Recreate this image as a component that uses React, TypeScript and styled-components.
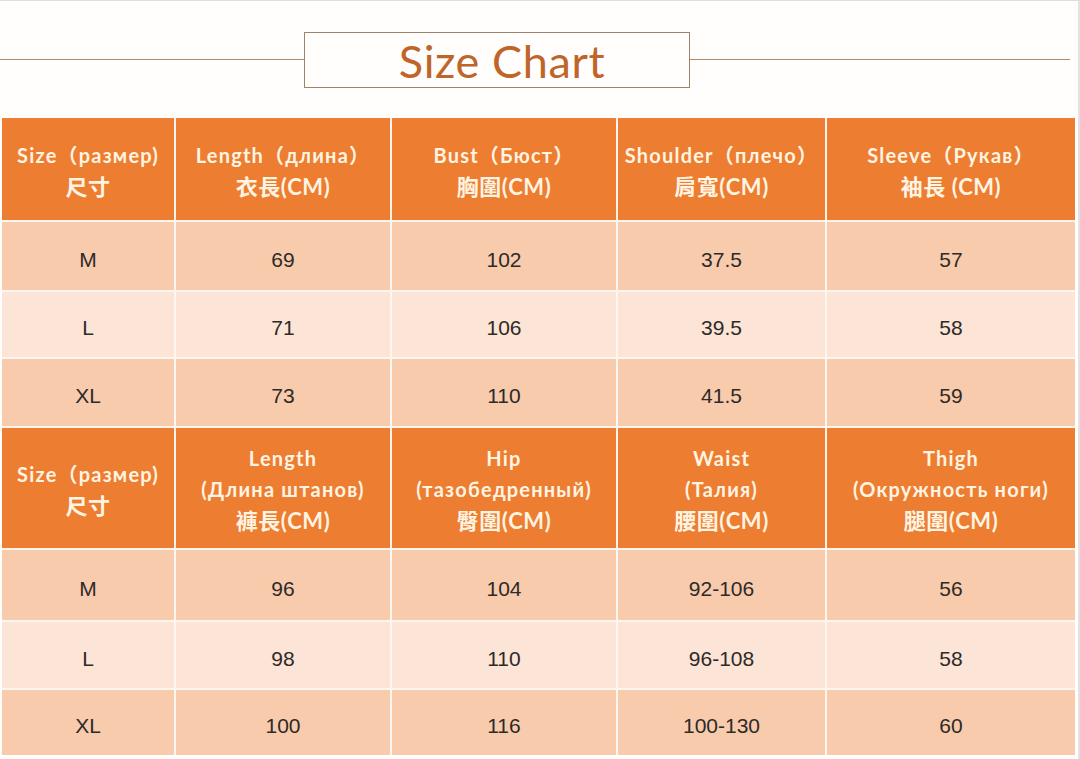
import React from 'react';
import styled, { createGlobalStyle } from 'styled-components';

const GlobalStyle = createGlobalStyle`
  html, body {
    margin: 0;
    padding: 0;
    background: #ffffff;
  }
`;

const Page = styled.div`
  width: 1080px;
  height: 759px;
  box-sizing: border-box;
  background: #fffefc;
  border-top: 1px solid #dedede;
  border-right: 2px solid #e2e2e2;
  display: flex;
  flex-direction: column;
  overflow: hidden;
`;

const TitleRow = styled.div`
  height: 117px;
  display: flex;
  align-items: flex-start;
  padding-top: 31px;
  box-sizing: border-box;
`;

const Rule = styled.div<{ $width: number }>`
  height: 1px;
  width: ${p => p.$width}px;
  background: #b08a6a;
  margin-top: 27px;
`;

const TitleBox = styled.div`
  width: 386px;
  height: 56px;
  box-sizing: border-box;
  border: 1.5px solid #a0846a;
  display: flex;
  align-items: center;
  justify-content: center;
  padding: 2px 0 0 10px;
  font-family: Lato, 'Open Sans', sans-serif;
  font-size: 45px;
  color: #c0652a;
  letter-spacing: 0.6px;
`;

const Table = styled.div`
  margin-left: 2px;
  width: 1073px;
  display: grid;
  grid-template-columns: 172px 214px 224px 207px 1fr;
  grid-template-rows: 102px 68px 65px 67px 120px 70px 66px 65px;
  gap: 2px;
  background: #fdf5ee;
`;

const HeadCell = styled.div`
  background: #ed7d31;
  color: #fff4e2;
  font-family: Lato, 'Open Sans', 'Noto Sans CJK TC', sans-serif;
  font-weight: 700;
  line-height: 31px;
  display: flex;
  flex-direction: column;
  align-items: center;
  justify-content: center;
  text-align: center;
  white-space: nowrap;
  padding-top: 3px;
  box-sizing: border-box;
`;

const HeadLine = styled.span<{ $cjk: boolean }>`
  font-size: ${p => (p.$cjk ? '22px' : '20px')};
  letter-spacing: ${p => (p.$cjk ? '0.5px' : '1.2px')};
`;

const Cell = styled.div<{ $shade: 'dark' | 'light' }>`
  background: ${p => (p.$shade === 'dark' ? '#f8cbad' : '#fce4d6')};
  color: #2e2a28;
  font-family: 'Liberation Sans', Arial, sans-serif;
  font-size: 21px;
  display: flex;
  align-items: center;
  justify-content: center;
  padding-top: 7px;
  box-sizing: border-box;
`;

const topHead = [
  ['Size（размер)', '尺寸'],
  ['Length（длина）', '衣長(CM)'],
  ['Bust（Бюст）', '胸圍(CM)'],
  ['Shoulder（плечо）', '肩寬(CM)'],
  ['Sleeve（Рукав）', '袖長 (CM)'],
];

const topRows = [
  ['M', '69', '102', '37.5', '57'],
  ['L', '71', '106', '39.5', '58'],
  ['XL', '73', '110', '41.5', '59'],
];

const bottomHead = [
  ['Size（размер)', '尺寸'],
  ['Length', '(Длина штанов)', '褲長(CM)'],
  ['Hip', '(тазобедренный)', '臀圍(CM)'],
  ['Waist', '(Талия)', '腰圍(CM)'],
  ['Thigh', '(Окружность ноги)', '腿圍(CM)'],
];

const bottomRows = [
  ['M', '96', '104', '92-106', '56'],
  ['L', '98', '110', '96-108', '58'],
  ['XL', '100', '116', '100-130', '60'],
];

const shades: ('dark' | 'light')[] = ['dark', 'light', 'dark'];

const isCjk = (s: string) => /[\u4e00-\u9fff]/.test(s);

const Section: React.FC<{ head: string[][]; rows: string[][]; id: string }> = ({ head, rows, id }) => (
  <>
    {head.map((lines, i) => (
      <HeadCell key={`${id}-h${i}`}>
        {lines.map(line => (
          <HeadLine key={line} $cjk={isCjk(line)}>
            {line}
          </HeadLine>
        ))}
      </HeadCell>
    ))}
    {rows.map((row, r) =>
      row.map((value, c) => (
        <Cell key={`${id}-${r}-${c}`} $shade={shades[r]}>
          {value}
        </Cell>
      ))
    )}
  </>
);

const App: React.FC = () => (
  <>
    <GlobalStyle />
    <Page>
      <TitleRow>
        <Rule $width={304} />
        <TitleBox>Size Chart</TitleBox>
        <Rule $width={380} />
      </TitleRow>
      <Table>
        <Section head={topHead} rows={topRows} id="top" />
        <Section head={bottomHead} rows={bottomRows} id="bottom" />
      </Table>
    </Page>
  </>
);

export default App;
